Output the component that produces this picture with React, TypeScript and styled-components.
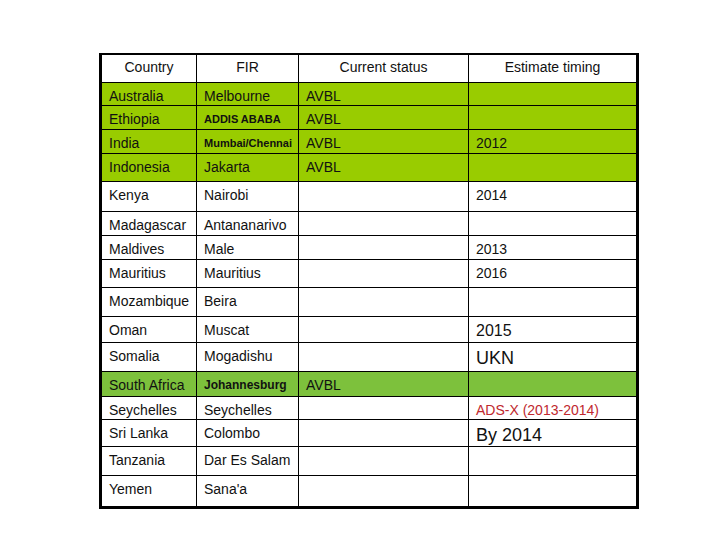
import React from 'react';
import styled, {createGlobalStyle} from 'styled-components';

const GlobalStyle = createGlobalStyle`
  * { box-sizing: border-box; }
  body {
    margin: 0;
    background: #fff;
    font-family: "Liberation Sans", Arial, sans-serif;
    color: #111;
  }
`;

const Page = styled.div`
  width: 720px;
  height: 540px;
  padding: 53px 0 0 99px;
`;

const Table = styled.table`
  width: 540px;
  table-layout: fixed;
  border-collapse: separate;
  border-spacing: 0;
  border-style: solid;
  border-color: #000;
  border-width: 2px 3px 3px 3px;
`;

const Row = styled.tr<{$bg?: string; $h: number}>`
  height: ${p => p.$h}px;
  background: ${p => p.$bg || '#fff'};

  &:last-child td {
    border-bottom: none;
  }
`;

const HeadCell = styled.th`
  font-weight: normal;
  font-size: 14px;
  line-height: 16px;
  text-align: center;
  vertical-align: top;
  padding: 4px 0 0;
  border-right: 1px solid #000;
  border-bottom: 1px solid #000;

  &:last-child {
    border-right: none;
  }
`;

const Cell = styled.td<{$size?: number; $bold?: boolean; $red?: boolean}>`
  font-size: ${p => p.$size || 14}px;
  font-weight: ${p => (p.$bold ? 'bold' : 'normal')};
  color: ${p => (p.$red ? '#c0282e' : '#111')};
  line-height: ${p => (p.$size && p.$size > 14 ? p.$size + 2 : 16)}px;
  vertical-align: top;
  padding: 5px 0 0 7px;
  white-space: nowrap;
  overflow: hidden;
  border-right: 1px solid #000;
  border-bottom: 1px solid #000;

  &:last-child {
    border-right: none;
  }
`;

type Entry = {
  country: string;
  fir: string;
  firSize?: number;
  firBold?: boolean;
  status?: string;
  timing?: string;
  timingSize?: number;
  timingRed?: boolean;
  bg?: string;
  h: number;
};

const LIME = '#99cc00';
const GREEN = '#7dc13c';

const rows: Entry[] = [
  {country: 'Australia', fir: 'Melbourne', status: 'AVBL', bg: LIME, h: 23},
  {country: 'Ethiopia', fir: 'ADDIS ABABA', firSize: 11, firBold: true, status: 'AVBL', bg: LIME, h: 24},
  {country: 'India', fir: 'Mumbai/Chennai', firSize: 11, firBold: true, status: 'AVBL', timing: '2012', bg: LIME, h: 24},
  {country: 'Indonesia', fir: 'Jakarta', status: 'AVBL', bg: LIME, h: 28},
  {country: 'Kenya', fir: 'Nairobi', timing: '2014', h: 30},
  {country: 'Madagascar', fir: 'Antananarivo', h: 24},
  {country: 'Maldives', fir: 'Male', timing: '2013', h: 24},
  {country: 'Mauritius', fir: 'Mauritius', timing: '2016', h: 28},
  {country: 'Mozambique', fir: 'Beira', h: 29},
  {country: 'Oman', fir: 'Muscat', timing: '2015', timingSize: 16, h: 26},
  {country: 'Somalia', fir: 'Mogadishu', timing: 'UKN', timingSize: 18, h: 29},
  {country: 'South Africa', fir: 'Johannesburg', firSize: 12, firBold: true, status: 'AVBL', bg: GREEN, h: 25},
  {country: 'Seychelles', fir: 'Seychelles', timing: 'ADS-X (2013-2014)', timingRed: true, h: 23},
  {country: 'Sri Lanka', fir: 'Colombo', timing: 'By 2014', timingSize: 18, h: 27},
  {country: 'Tanzania', fir: 'Dar Es Salam', h: 29},
  {country: 'Yemen', fir: "Sana'a", h: 30},
];

const App: React.FunctionComponent = () => {
  return (
    <Page>
      <GlobalStyle />
      <Table>
        <colgroup>
          <col style={{width: 95}} />
          <col style={{width: 102}} />
          <col style={{width: 170}} />
          <col style={{width: 167}} />
        </colgroup>
        <thead>
          <Row $h={28}>
            <HeadCell>Country</HeadCell>
            <HeadCell>FIR</HeadCell>
            <HeadCell>Current status</HeadCell>
            <HeadCell>Estimate timing</HeadCell>
          </Row>
        </thead>
        <tbody>
          {rows.map(r => (
            <Row key={r.country} $bg={r.bg} $h={r.h}>
              <Cell>{r.country}</Cell>
              <Cell $size={r.firSize} $bold={r.firBold}>{r.fir}</Cell>
              <Cell>{r.status}</Cell>
              <Cell $size={r.timingSize} $red={r.timingRed}>{r.timing}</Cell>
            </Row>
          ))}
        </tbody>
      </Table>
    </Page>
  );
};

export default App;
